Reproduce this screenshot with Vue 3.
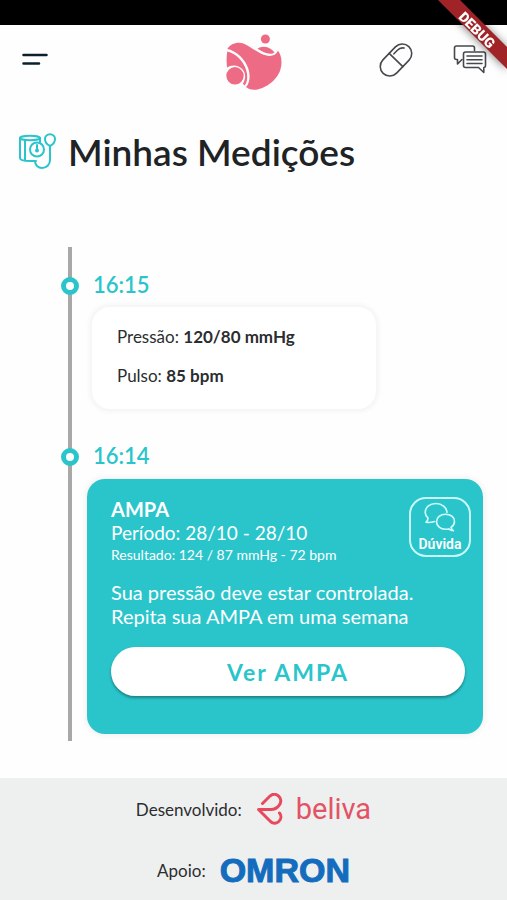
<script setup>
const reading = [
  { label: 'Pressão:', value: '120/80 mmHg' },
  { label: 'Pulso:', value: '85 bpm' },
]
</script>

<template>
  <div class="screen">
    <div class="status-bar"></div>
    <svg class="debug" viewBox="0 0 80 80" aria-hidden="true">
      <path class="ribbon" d="M11 0H33L80 47V69Z" />
      <text class="ribbon-text" x="50" y="35" transform="rotate(45 50 30)">DEBUG</text>
    </svg>

    <header class="top-bar">
      <button class="icon-button" type="button" aria-label="Menu">
        <svg class="menu-icon" viewBox="0 0 28 16">
          <path d="M3.500 3H26.500M3.500 11.500H19" />
        </svg>
      </button>
      <svg class="logo" viewBox="224 30 60 60" aria-hidden="true">
        <circle cx="265.400" cy="39" r="4.500" />
        <path d="M257.500 48.800C261 45.500 269 45.600 274.600 52.400C270.500 55.500 263 52.500 257.500 48.800Z" />
        <path d="M227.400 49C230.500 43.500 238 41.300 244 43.800C252 47.300 261 56 269.500 56C273.500 56 276.300 54.200 278 50.800C281.500 55 282.600 63 280.300 70C277 80.500 264 89.800 254 89.800C250.500 89.700 247.600 88.500 246 87C249.800 83 250.500 76 248.600 69.500C245.500 59.500 237 51 227.400 49Z" />
        <path d="M227.300 51.500C236 53.500 243 60.500 246 69.500C248 76 247.500 82 244.700 85.500L242.800 83.800C246 79 246 73.500 242.500 69.300C238.500 64.700 231.500 64.200 227 67.600C226.400 62 226.400 56 227.300 51.500Z" />
        <circle cx="235" cy="75.800" r="8.700" />
      </svg>
      <div class="actions">
        <button class="icon-button" type="button" aria-label="Medicamentos">
          <svg class="pill-icon" viewBox="0 0 34 34">
            <g transform="rotate(-46 17 17)">
              <rect x="-1.500" y="7.500" width="37" height="19" rx="9.500" />
              <path d="M17 7.500V26.500M20 11.200H25C28 11.200 30 12.500 31.200 14.500" />
            </g>
          </svg>
        </button>
        <button class="icon-button" type="button" aria-label="Mensagens">
          <svg class="chat-icon" viewBox="0 0 34 30">
            <path d="M9 14.500L4.500 19V14.500H3.500Q1.500 14.500 1.500 12.500V3Q1.500 1 3.500 1H19.500Q21.500 1 21.500 3V5.500" />
            <path d="M12.500 7H30.500Q32.500 7 32.500 9V20.500Q32.500 22.500 30.800 22.500V27.500L25.500 22.500H12.500Q10.500 22.500 10.500 20.500V9Q10.500 7 12.500 7ZM14 11H29M14 14.800H29M14 18.500H29" />
          </svg>
        </button>
      </div>
    </header>

    <main class="content">
      <div class="heading">
        <svg class="monitor-icon" viewBox="0 0 38 38" aria-hidden="true">
          <ellipse cx="12" cy="5" rx="10" ry="2.200" />
          <path d="M2 5V25C2 27 7 28 12 28H18M22 5V9M7 7.500V27.500" />
          <circle cx="19" cy="16.500" r="7" />
          <path d="M19 12V17" />
          <circle cx="19" cy="17.500" r="1" />
          <path d="M17 28C17 32 20 35 24 35C29 35 32 31 32 27V13" />
          <path d="M32 13C29 11.500 27 8.500 27 6C27 3.500 29 1.200 32 1.200C35 1.200 37 3.500 37 6C37 8.500 35 11.500 32 13Z" />
        </svg>
        <h1>Minhas Medições</h1>
      </div>

      <ol class="timeline">
        <li class="entry">
          <time class="time">16:15</time>
          <div class="card reading">
            <p v-for="item in reading" :key="item.label">
              {{ item.label }} <strong>{{ item.value }}</strong>
            </p>
          </div>
        </li>
        <li class="entry">
          <time class="time">16:14</time>
          <div class="card summary">
            <div class="summary-head">
              <div>
                <h2>AMPA</h2>
                <p class="period">Período: 28/10 - 28/10</p>
                <p class="result">Resultado: 124 / 87 mmHg - 72 bpm</p>
              </div>
              <button class="question" type="button">
                <svg class="bubbles-icon" viewBox="0 0 32 31" aria-hidden="true">
                  <path d="M10.500 19.500C8 20.300 4.500 20.600 2 20.300C3.300 19 4 17.500 4 16C2 14 1.200 12 1.200 10.500C1.200 5 6 1.500 12 1.500C18 1.500 22.500 5.500 23 10.300" />
                  <path d="M27 25.500C29.300 24 30.500 21.800 30.500 19.500C30.500 15 26.500 12.300 21.500 12.300C16.500 12.300 12.500 15.500 12.500 19.800C12.500 24.200 16.500 27.300 21.500 27.300C22.800 27.300 23.800 27.200 24.800 26.900C26 28 27.800 28.700 29.500 28.800C28.300 28 27.500 26.800 27 25.500Z" />
                </svg>
                Dúvida
              </button>
            </div>
            <p class="advice">Sua pressão deve estar controlada.<br />Repita sua AMPA em uma semana</p>
            <button class="view" type="button">Ver AMPA</button>
          </div>
        </li>
      </ol>
    </main>

    <footer class="footer">
      <div class="credit">
        <span>Desenvolvido:</span>
        <span class="beliva">
          <svg class="beliva-mark" viewBox="0 0 28 32" aria-hidden="true">
            <path d="M6.500 10.500L13.500 3.500C16.500 .5 20 1 22.500 3C25.500 5.500 25.500 9.500 23 12.500C21 15 18 16.500 15 16.500H2.500L14 28C16.500 31 20 31 22.800 28.500C25.500 26 25.500 22.500 23.500 20" />
          </svg>
          beliva
        </span>
      </div>
      <div class="credit">
        <span>Apoio:</span>
        <span class="omron">OMRON</span>
      </div>
    </footer>
  </div>
</template>

<style>
body {
  margin: 0;
  background: #fefefe;
}
</style>

<style scoped>
.screen {
  position: relative;
  display: flex;
  flex-direction: column;
  min-height: 100vh;
  overflow: hidden;
  font-family: Lato, "Liberation Sans", sans-serif;
  color: #2b2d2f;
}
h1, h2, p, ol {
  margin: 0;
  padding: 0;
}
button {
  font-family: inherit;
  border: 0;
  background: none;
  padding: 0;
  cursor: pointer;
}
svg {
  display: block;
  fill: none;
  stroke-linecap: round;
  stroke-linejoin: round;
}
.status-bar {
  height: 25px;
  background: #000;
}
.debug {
  position: absolute;
  top: 0;
  right: 0;
  width: 80px;
  height: 80px;
  z-index: 1;
  filter: drop-shadow(0 1px 4px rgba(0, 0, 0, 0.5));
}
.ribbon {
  fill: #a02328;
}
.ribbon-text {
  fill: #fff;
  font: 900 14px Roboto, sans-serif;
  text-anchor: middle;
}
.top-bar {
  display: grid;
  grid-template-columns: 1fr auto 1fr;
  align-items: center;
  height: 70px;
  padding: 0 20px;
}
.icon-button {
  justify-self: start;
}
.menu-icon {
  width: 28px;
  height: 16px;
  stroke: #0c1f2c;
  stroke-width: 2.5;
}
.logo {
  width: 60px;
  height: 60px;
  fill: #ee6b86;
}
.actions {
  display: flex;
  justify-content: flex-end;
  align-items: center;
  gap: 40px;
}
.pill-icon {
  width: 34px;
  height: 34px;
  overflow: visible;
  stroke: #45494d;
  stroke-width: 1.6;
}
.chat-icon {
  width: 34px;
  height: 30px;
  stroke: #45494d;
  stroke-width: 1.6;
}
.content {
  flex: 1;
}
.heading {
  display: flex;
  align-items: center;
  gap: 12px;
  padding: 35px 18px 0;
}
.monitor-icon {
  width: 38px;
  height: 38px;
  stroke: #2ac5cb;
  stroke-width: 2;
}
h1 {
  font-size: 37px;
  line-height: 44px;
  font-weight: 600;
  color: #202325;
}
.timeline {
  list-style: none;
  margin: 73px 24px 0 68px;
  padding: 22px 0 7px;
  border-left: 4px solid #a8a8a8;
}
.entry + .entry {
  margin-top: 31px;
}
.time {
  position: relative;
  display: block;
  padding-left: 21px;
  font-size: 22px;
  line-height: 32px;
  font-weight: 600;
  color: #2ac5cb;
}
.time::before {
  content: "";
  position: absolute;
  left: -11px;
  top: 8px;
  box-sizing: border-box;
  width: 18px;
  height: 18px;
  border: 5px solid #2ac5cb;
  border-radius: 50%;
  background: #fff;
}
.card {
  box-sizing: border-box;
  border-radius: 18px;
  box-shadow: 0 0 4px 3px rgba(0, 0, 0, 0.04);
}
.reading {
  display: grid;
  gap: 15px;
  width: 69%;
  margin: 6px 0 0 20px;
  padding: 18px 25px 21px;
  background: #fff;
  font-size: 17px;
  line-height: 24px;
}
.summary {
  margin: 7px 0 0 15px;
  padding: 18px 18px 38px 24px;
  background: #2ac5cb;
  color: #fff;
}
.summary-head {
  display: flex;
  justify-content: space-between;
  align-items: flex-start;
}
h2 {
  font-size: 20px;
  line-height: 24px;
  font-weight: 700;
}
.period {
  font-size: 19px;
  line-height: 24px;
}
.result {
  font-size: 14px;
  line-height: 19px;
}
.question {
  display: flex;
  flex-direction: column;
  align-items: center;
  justify-content: space-between;
  box-sizing: border-box;
  width: 62px;
  height: 60px;
  margin-right: -6px;
  padding: 3px 0 2px;
  border: 2px solid #c9fbfb;
  border-radius: 17px;
  color: #fff;
  font: 600 14px/18px Roboto, sans-serif;
}
.bubbles-icon {
  width: 32px;
  height: 31px;
  stroke: #d5ffff;
  stroke-width: 1.6;
}
.advice {
  margin-top: 16px;
  font-size: 20px;
  line-height: 24px;
}
.view {
  display: block;
  width: 100%;
  height: 49px;
  margin-top: 19px;
  border-radius: 25px;
  background: #fff;
  box-shadow: 0 2px 3px rgba(0, 0, 0, 0.35);
  color: #2ac5cb;
  font-size: 23px;
  font-weight: 700;
  letter-spacing: 2px;
}
.footer {
  display: grid;
  gap: 19px;
  padding: 10px 0 9px;
  background: #eef0f0;
  font-size: 17px;
}
.credit {
  display: flex;
  justify-content: center;
  align-items: center;
  gap: 14px;
  height: 42px;
}
.beliva {
  display: flex;
  align-items: center;
  gap: 12px;
  color: #e35366;
  font-family: Roboto, sans-serif;
  font-size: 29px;
}
.beliva-mark {
  width: 28px;
  height: 32px;
  stroke: #e8495c;
  stroke-width: 3;
}
.omron {
  color: #136cbd;
  font-family: "Liberation Sans", sans-serif;
  font-size: 34px;
  font-weight: 700;
  -webkit-text-stroke: 1px #136cbd;
}
</style>
